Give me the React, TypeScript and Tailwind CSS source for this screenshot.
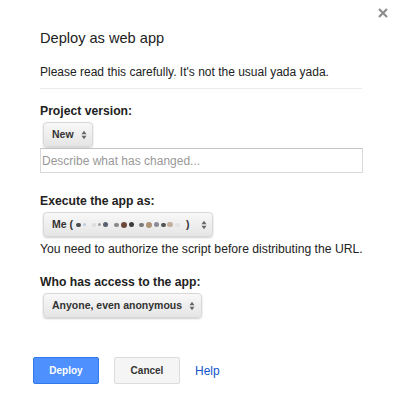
import React from "react";

const Arrows = () => (
  <svg width="6" height="10" viewBox="0 0 6 10" className="shrink-0">
    <path d="M3 0.8 L5.5 4.2 L0.5 4.2 Z" fill="#666" />
    <path d="M3 9.2 L5.5 5.8 L0.5 5.8 Z" fill="#666" />
  </svg>
);

const Blur = () => {
  const dots = [
    { c: "#444", w: 5, h: 4, o: 0.95 },
    { c: "#9cc0dd", w: 3, h: 3, o: 0.7 },
    { c: "#fff", w: 3, h: 3, o: 0 },
    { c: "#d0d0d0", w: 4, h: 4, o: 0.6 },
    { c: "#8a8a8a", w: 3, h: 3, o: 0.8 },
    { c: "#4f5a6a", w: 5, h: 5, o: 0.95 },
    { c: "#fff", w: 3, h: 3, o: 0 },
    { c: "#777", w: 5, h: 4, o: 0.85 },
    { c: "#6b4a3a", w: 6, h: 6, o: 1 },
    { c: "#333", w: 5, h: 5, o: 0.95 },
    { c: "#fff", w: 2, h: 3, o: 0 },
    { c: "#666", w: 5, h: 4, o: 0.85 },
    { c: "#a88a6a", w: 6, h: 6, o: 0.9 },
    { c: "#7a7a8a", w: 5, h: 5, o: 0.85 },
    { c: "#444", w: 5, h: 4, o: 0.9 },
    { c: "#b8a088", w: 6, h: 5, o: 0.8 },
    { c: "#ddd", w: 5, h: 4, o: 0.7 },
  ];
  return (
    <span className="flex items-center justify-between w-[104px] ml-[3px] mr-[6px]">
      {dots.map((d, i) => (
        <span
          key={i}
          className="inline-block rounded-full"
          style={{ width: d.w, height: d.h, background: d.c, opacity: d.o, filter: "blur(0.7px)" }}
        />
      ))}
    </span>
  );
};

const Select = ({ children, w, pr }: { children: React.ReactNode; w: string; pr: string }) => (
  <div
    className={`${w} ${pr} h-[25px] ml-[3px] flex items-center justify-between pl-[8px] whitespace-nowrap rounded-[4px] border border-[#d8d8d8] bg-gradient-to-b from-[#f8f8f8] to-[#e5e5e5] shadow-[0_1px_2px_rgba(0,0,0,0.2)] text-[10.5px] font-bold text-[#333]`}
  >
    {children}
    <Arrows />
  </div>
);

export default function App() {
  return (
    <div
      className="relative w-[400px] h-[397px] bg-white pl-[40px] pt-[28px] text-[#222]"
      style={{ fontFamily: '"Liberation Sans", Arial, sans-serif' }}
    >
      <svg className="absolute left-[378px] top-[8px]" width="10" height="10" viewBox="0 0 10 10">
        <path d="M1 1 L9 9 M9 1 L1 9" stroke="#8c8c8c" strokeWidth="2.2" />
      </svg>
      <div className="text-[14.6px] leading-[20px] text-[#222]">Deploy as web app</div>
      <div className="mt-[16px] text-[12px] leading-[16px]">Please read this carefully. It's not the usual yada yada.</div>
      <div className="mt-[8px] w-[322px] h-px bg-[#ebebeb]" />

      <div className="mt-[14px] text-[12.2px] leading-[16px] font-bold">Project version:</div>
      <div className="mt-[3px]">
        <Select w="w-[50px]" pr="pr-[5px]">New</Select>
      </div>
      <div className="mt-[1px] w-[323px] h-[25px] border border-[#d9d9d9] border-t-[#c4c4c4] flex items-center px-[1px] text-[12px] text-[#999]">
        Describe what has changed...
      </div>

      <div className="mt-[20px] text-[12.2px] leading-[16px] font-bold">Execute the app as:</div>
      <div className="mt-[3px]">
        <Select w="w-[170px]" pr="pr-[5px]">
          <span className="flex items-center">
            Me (<Blur />)
          </span>
        </Select>
      </div>
      <div className="mt-[4px] text-[12.2px] leading-[16px]">You need to authorize the script before distributing the URL.</div>

      <div className="mt-[17px] text-[12.2px] leading-[16px] font-bold">Who has access to the app:</div>
      <div className="mt-[3px]">
        <Select w="w-[159px]" pr="pr-[6px]">Anyone, even anonymous</Select>
      </div>

      <div className="mt-[39px] -ml-[7px] flex items-center">
        <div className="w-[66px] h-[27px] rounded-[2px] border border-[#3079ed] bg-[#4d90fe] text-white text-[10px] font-bold flex items-center justify-center">
          Deploy
        </div>
        <div className="ml-[15px] w-[66px] h-[27px] rounded-[2px] border border-[#dcdcdc] bg-[#f5f5f5] text-[#333] text-[10px] font-bold flex items-center justify-center">
          Cancel
        </div>
        <div className="ml-[15px] text-[12px] text-[#1155cc]">Help</div>
      </div>
    </div>
  );
}
